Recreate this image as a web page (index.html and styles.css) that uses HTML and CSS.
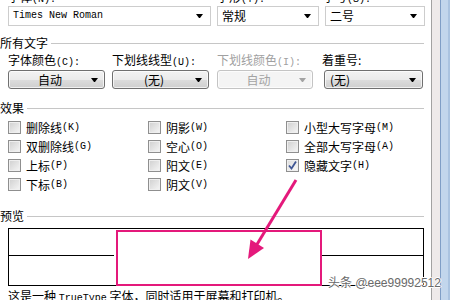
FILE: index.html
```html
<!DOCTYPE html>
<html>
<head>
<meta charset="utf-8">
<link rel="stylesheet" href="styles.css">
</head>
<body>
<div class="window">
  <div class="content">
    <div class="toplabels">
      <span class="tl1">字体<span class="l">(N):</span></span>
      <span class="tl2">字形<span class="l">(Y):</span></span>
      <span class="tl3">字号<span class="l">(S):</span></span>
    </div>
    <div class="combos">
      <div class="combo w1"><span class="ctext l">Times New Roman</span><i class="tri"></i></div>
      <div class="combo w2"><span class="ctext">常规</span><i class="tri"></i></div>
      <div class="combo w3"><span class="ctext">二号</span><i class="tri"></i></div>
    </div>

    <div class="group g1"><span>所有文字</span></div>
    <div class="labels">
      <span class="c1">字体颜色<span class="l">(C):</span></span>
      <span class="c2">下划线线型<span class="l">(U):</span></span>
      <span class="c3 dis">下划线颜色<span class="l">(I):</span></span>
      <span class="c4">着重号:</span>
    </div>
    <div class="buttons">
      <div class="btn b1"><span class="btext">自动</span><i class="tri"></i></div>
      <div class="btn b2"><span class="btext">(无)</span><i class="tri"></i></div>
      <div class="btn b3 disabled"><span class="btext">自动</span><i class="tri"></i></div>
      <div class="btn b4"><span class="btext left">(无)</span><i class="tri"></i></div>
    </div>

    <div class="group g2"><span>效果</span></div>
    <div class="effects">
      <label class="chk"><i class="box"></i>删除线<span class="l">(K)</span></label>
      <label class="chk"><i class="box"></i>阴影<span class="l">(W)</span></label>
      <label class="chk"><i class="box"></i>小型大写字母<span class="l">(M)</span></label>
      <label class="chk"><i class="box"></i>双删除线<span class="l">(G)</span></label>
      <label class="chk"><i class="box"></i>空心<span class="l">(O)</span></label>
      <label class="chk"><i class="box"></i>全部大写字母<span class="l">(A)</span></label>
      <label class="chk"><i class="box"></i>上标<span class="l">(P)</span></label>
      <label class="chk"><i class="box"></i>阳文<span class="l">(E)</span></label>
      <label class="chk"><i class="box checked"><svg width="11" height="11" viewBox="0 0 11 11"><path d="M2 5.5 L4.5 8.5 L9 1.5" fill="none" stroke="#3f5694" stroke-width="1.8"/></svg></i>隐藏文字<span class="l">(H)</span></label>
      <label class="chk"><i class="box"></i>下标<span class="l">(B)</span></label>
      <label class="chk"><i class="box"></i>阴文<span class="l">(V)</span></label>
    </div>

    <div class="group g3"><span>预览</span></div>
    <div class="preview">
      <div class="pl"></div>
      <div class="ps"></div>
      <div class="pr"></div>
      <div class="mark"></div>
    </div>
    <div class="desc">这是一种 <span class="l">TrueType</span> 字体，同时适用于屏幕和打印机。</div>
  </div>
  <div class="frame"></div>
</div>

<svg class="arrow" width="450" height="300" viewBox="0 0 450 300">
  <line x1="296" y1="180" x2="256" y2="246" stroke="#e4197b" stroke-width="3"/>
  <polygon points="248,259 264,248 250.5,239.5" fill="#e4197b"/>
</svg>
<div class="watermark">头条 @eee99992512</div>
</body>
</html>
```

FILE: styles.css
```css
* { box-sizing: border-box; }
body {
  margin: 0;
  width: 450px;
  height: 300px;
  overflow: hidden;
  background: #fff;
  font: 12px/14px "Noto Sans CJK SC", sans-serif;
  color: #000;
  position: relative;
}
.l {
  font-family: "Liberation Mono", monospace;
  font-size: 10px;
}
.window { display: flex; height: 300px; }
.content { width: 431px; position: relative; }
.frame {
  flex: 1;
  background: linear-gradient(to right, #a2a2a2 0 1px, #eeeaea 1px 9px, #7f9ec6 9px 10px, #c2d6ec 10px 17px, #aac3e0 17px);
}

.toplabels {
  margin-top: -10px;
  height: 14px;
  display: flex;
  padding-left: 8px;
}
.tl1 { width: 209px; }
.tl2 { width: 106px; }

.combos {
  margin-top: 2px;
  display: flex;
  gap: 6px;
  padding-left: 8px;
  height: 20px;
}
.combo {
  height: 20px;
  border: 1px solid #cdcdcd;
  display: flex;
  align-items: center;
  padding-left: 4px;
  padding-right: 7px;
  background: #fff;
}
.w1 { width: 203px; }
.w2 { width: 102px; }
.w3 { width: 100px; }
.ctext { flex: 1; white-space: nowrap; }
.tri {
  display: block;
  width: 1px;
  height: 0;
  border-left: 3px solid transparent;
  border-right: 3px solid transparent;
  border-top: 4px solid #000;
  box-sizing: content-box;
}

.group {
  display: flex;
  align-items: center;
  height: 14px;
  padding-right: 7px;
}
.group::after {
  content: "";
  flex: 1;
  height: 1px;
  background: #c6c6c6;
  margin-left: 3px;
}
.g1 { margin-top: 10px; }
.g2 { margin-top: 12px; }
.g3 { margin-top: 15px; }

.labels {
  margin-top: 3px;
  height: 14px;
  display: flex;
  padding-left: 8px;
  white-space: nowrap;
}
.c1 { width: 104px; }
.c2 { width: 105px; }
.c3 { width: 105px; }
.dis { color: #a0a0a0; }

.buttons {
  margin-top: 3px;
  height: 19px;
  display: flex;
  padding-left: 8px;
}
.btn {
  height: 19px;
  border: 1px solid #707070;
  border-radius: 3px;
  display: flex;
  align-items: center;
  padding-right: 6px;
  background: linear-gradient(#f3f3f3 0%, #ebebeb 50%, #dddddd 50%, #cfcfcf 100%);
  box-shadow: inset 0 0 0 1px rgba(255,255,255,0.7);
}
.b1 { width: 97px; margin-right: 7px; }
.b2 { width: 97px; margin-right: 8px; }
.b3 { width: 96px; margin-right: 11px; }
.b4 { width: 99px; }
.btext { flex: 1; text-align: center; }
.btext.left { text-align: left; padding-left: 5px; }
.disabled {
  border-color: #c4c4c4;
  background: #f4f4f4;
  color: #a3a3a3;
}
.disabled .tri { border-top-color: #a3a3a3; }

.effects {
  margin-top: 3px;
  display: grid;
  grid-template-columns: 140px 138px 1fr;
  grid-auto-rows: 19px;
  padding-left: 8px;
}
.chk {
  display: flex;
  align-items: center;
  white-space: nowrap;
}
.box {
  display: flex;
  align-items: center;
  justify-content: center;
  width: 13px;
  height: 13px;
  border: 1px solid #8f8f8f;
  background: linear-gradient(135deg, #cfcfcf, #f6f6f6);
  box-shadow: inset 0 0 0 1px #efefef;
  margin-right: 5px;
}
.box.checked { background: linear-gradient(135deg, #dcdcdc, #fafafa); }

.preview {
  position: relative;
  margin-top: 5px;
  margin-left: 8px;
  width: 416px;
  height: 58px;
  border: 1px solid #000;
  display: flex;
}
.pl { width: 105px; height: 27px; border-bottom: 1px solid #000; }
.ps { width: 208px; }
.pr { flex: 1; height: 27px; border-bottom: 1px solid #000; }
.mark {
  position: absolute;
  left: 107px;
  top: 1px;
  width: 206px;
  height: 56px;
  border: 2px solid #e4197b;
}

.desc {
  margin-top: 3px;
  padding-left: 8px;
  white-space: nowrap;
}

.arrow {
  position: absolute;
  left: 0;
  top: 0;
  pointer-events: none;
}
.watermark {
  position: absolute;
  left: 328px;
  top: 276px;
  font: 12px/14px "Liberation Sans", "Noto Sans CJK SC", sans-serif;
  color: #6a6a6a;
  text-shadow: 1px 0 0 #fff, -1px 0 0 #fff, 0 1px 0 #fff, 0 -1px 0 #fff;
  white-space: nowrap;
}
```
